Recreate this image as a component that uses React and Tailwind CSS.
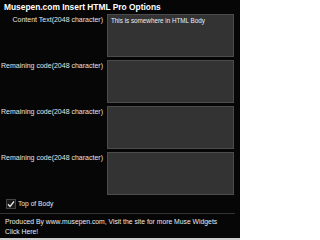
export default function App() {
  const rows = [
    { label: "Content Text(2048 character)", value: "This is somewhere in HTML Body" },
    { label: "Remaining code(2048 character)", value: "" },
    { label: "Remaining code(2048 character)", value: "" },
    { label: "Remaining code(2048 character)", value: "" },
  ];
  return (
    <div className="w-[240px] h-[240px] bg-[#060606] text-[#e8e8e8] overflow-hidden flex flex-col" style={{ fontFamily: '"Liberation Sans", Arial, sans-serif' }}>
      <div className="h-[14px] pl-[4px] flex items-center text-[8.4px] font-bold text-white leading-none">
        Musepen.com Insert HTML Pro Options
      </div>
      <div className="flex flex-col gap-[3px] pr-[6px]">
        {rows.map((r, i) => (
          <div key={i} className="flex">
            <div className="w-[103px] text-right text-[7px] leading-none pt-[2px] text-[#e4e4e4]">{r.label}</div>
            <div className="ml-[4px] w-[127px] h-[43px] bg-[#333333] border border-[#4c4c4c] text-[6.3px] leading-none px-[3px] pt-[3px] text-[#f0f0f0]">
              {r.value}
            </div>
          </div>
        ))}
      </div>
      <div className="flex items-center gap-[2px] pl-[6px] mt-[4px] h-[10px] text-[6.7px] leading-none">
        <svg width="10" height="10" viewBox="0 0 10 10">
          <rect x="0.5" y="0.5" width="9" height="9" fill="#1a1a1a" stroke="#444" />
          <path d="M2 5.2 L4 7.5 L8 2.5" stroke="#e8e8e8" strokeWidth="1.3" fill="none" />
        </svg>
        <span>Top of Body</span>
      </div>
      <div className="mt-[4px] mr-[5px] h-px bg-[#333]"></div>
      <div className="pl-[5px] pt-[3px] text-[6.8px] leading-[10px] text-[#ececec]">
        <div>Produced By www.musepen.com, Visit the site for more Muse Widgets</div>
        <div>Click Here!</div>
      </div>
      <div className="mt-auto h-[2px] bg-[#cfcfcf]"></div>
    </div>
  );
}
